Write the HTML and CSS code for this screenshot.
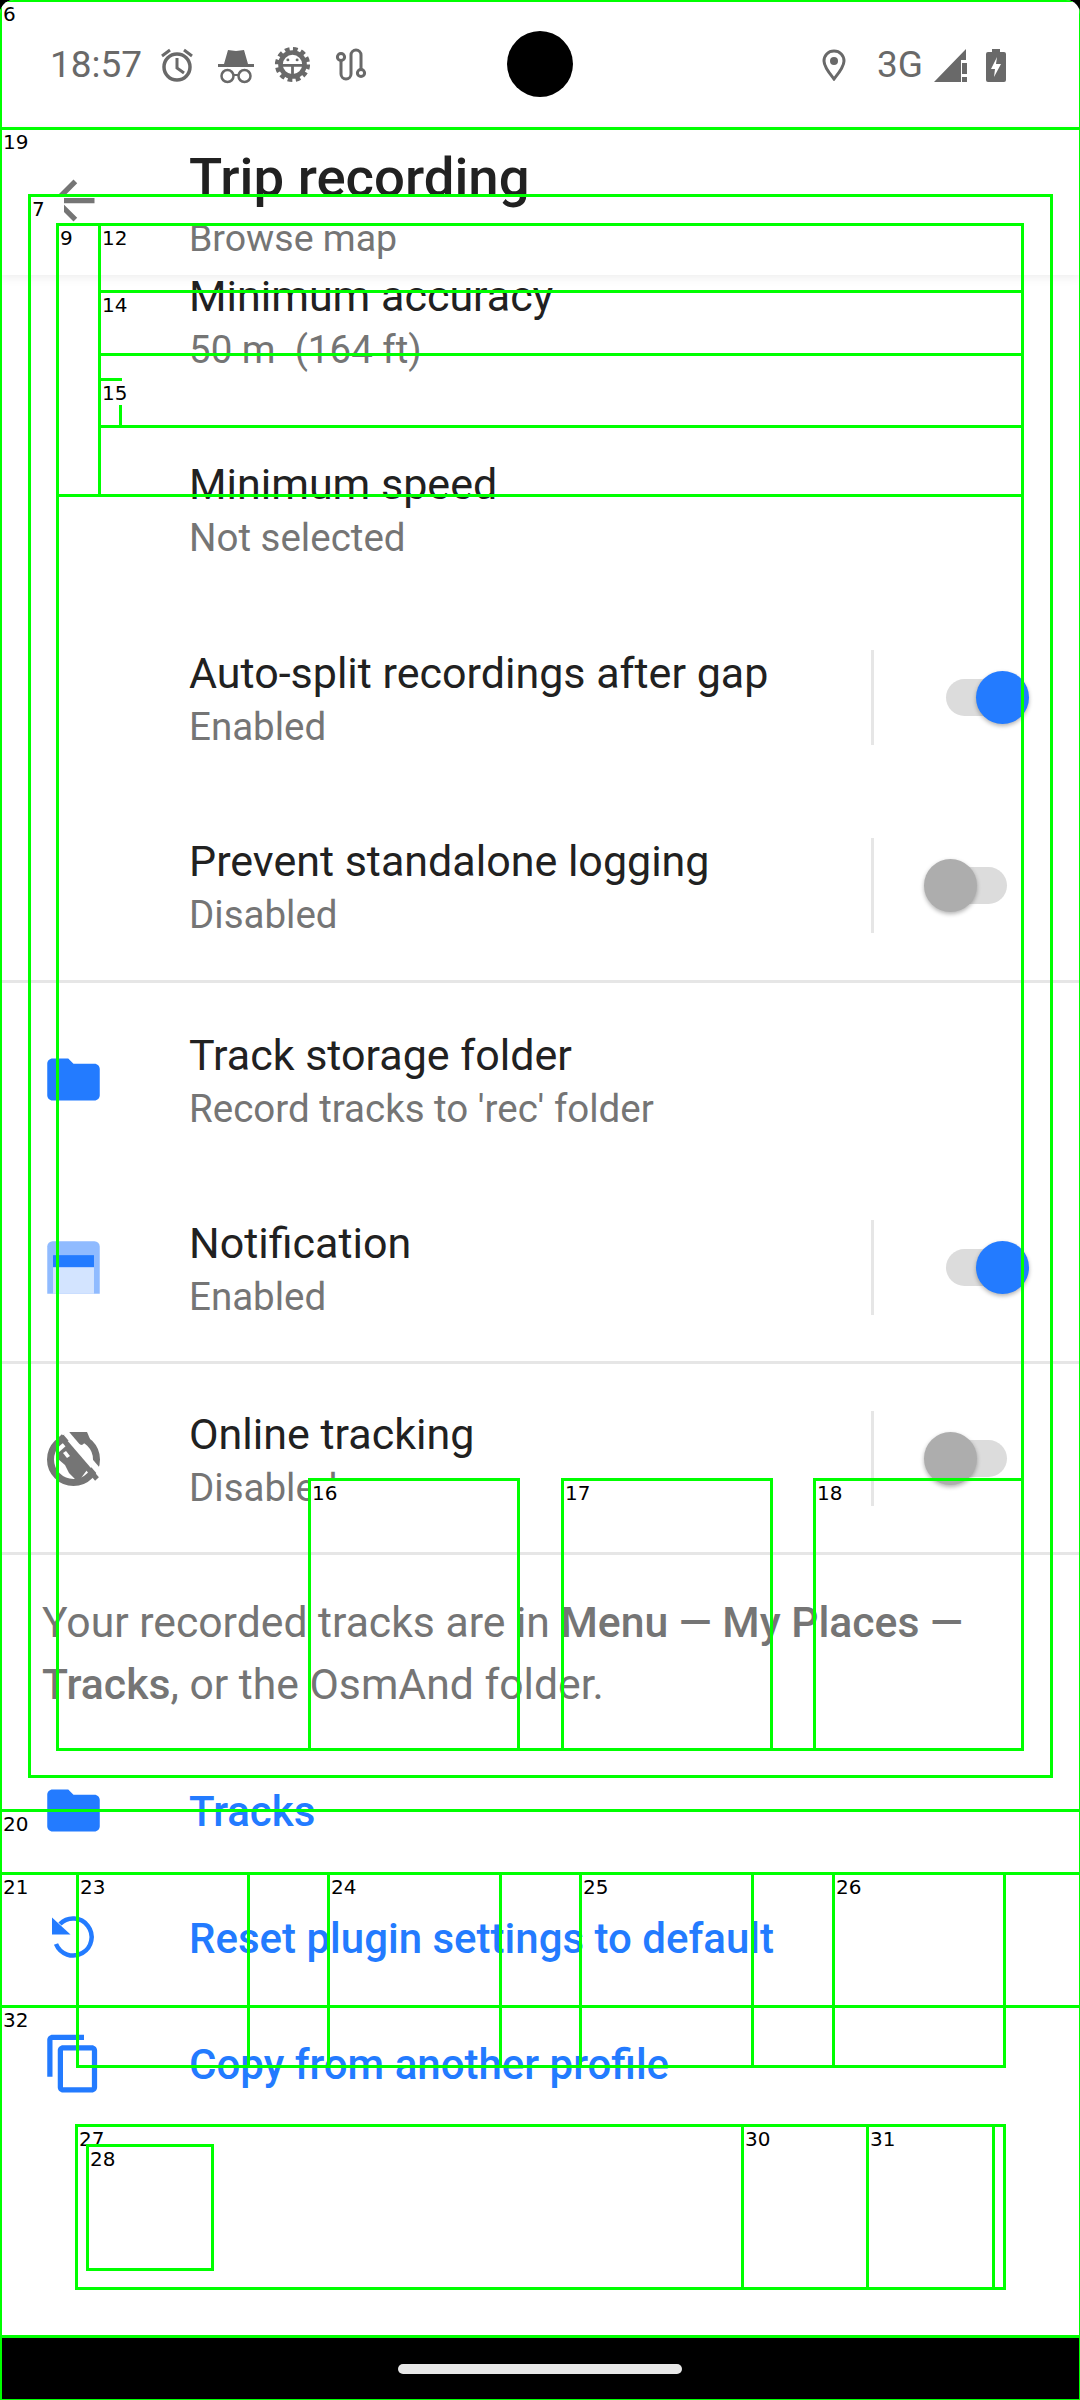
FILE: index.html
```html
<!DOCTYPE html>
<html lang="en">

<head>
  <meta charset="UTF-8">
  <meta name="viewport" content="width=device-width, initial-scale=1.0">
  <title>Trip recording</title>
  <link rel="stylesheet" href="styles.css">
</head>

<body>
  <div class="screen">
    <!-- Status bar -->
    <div class="status-bar">
      <span class="time">18:57</span>
      <svg class="st-alarm" viewBox="0 0 36 38" width="36" height="38">
        <circle cx="18" cy="21" r="13" fill="none" stroke="#696969" stroke-width="3.5"/>
        <path d="M18 12v10l7 5M3 10l8-6M33 10l-8-6" fill="none" stroke="#696969" stroke-width="3"/>
      </svg>
      <svg class="st-spy" viewBox="0 0 38 38" width="38" height="38">
        <path d="M7 17L11 3l8 1 8-1 4 14z" fill="#696969"/>
        <rect x="1" y="17" width="36" height="3" fill="#696969"/>
        <circle cx="10.5" cy="29" r="6" fill="none" stroke="#696969" stroke-width="2.5"/>
        <circle cx="27.5" cy="29" r="6" fill="none" stroke="#696969" stroke-width="2.5"/>
        <path d="M16 28h6" stroke="#696969" stroke-width="2"/>
      </svg>
      <svg class="st-gear" viewBox="0 0 40 40" width="37" height="37">
        <circle cx="20" cy="20" r="16.5" fill="none" stroke="#696969" stroke-width="5" stroke-dasharray="5 3.64"/>
        <circle cx="20" cy="20" r="13" fill="none" stroke="#696969" stroke-width="5"/>
        <path d="M8 21h24M20 21v12" stroke="#696969" stroke-width="3"/>
        <circle cx="15" cy="15" r="1.6" fill="#696969"/>
        <circle cx="25" cy="15" r="1.6" fill="#696969"/>
      </svg>
      <svg class="st-route" viewBox="0 0 32 36" width="32" height="36">
        <circle cx="6" cy="10" r="3.6" fill="none" stroke="#696969" stroke-width="3"/>
        <circle cx="26" cy="26" r="3.6" fill="none" stroke="#696969" stroke-width="3"/>
        <path d="M6 14v13a5 5 0 0 0 10 0V8a5 5 0 0 1 10 0v14" fill="none" stroke="#696969" stroke-width="3"/>
      </svg>
      <span class="status-spacer"></span>
      <svg class="st-pin" viewBox="0 0 24 32" width="24" height="32">
        <path d="M12 2C6 2 2 6.500 2 12c0 6 6 13 10 18 4-5 10-12 10-18C22 6.500 18 2 12 2z" fill="none" stroke="#696969" stroke-width="3"/>
        <circle cx="12" cy="12" r="4" fill="#696969"/>
      </svg>
      <span class="net">3G</span>
      <svg class="st-signal" viewBox="0 0 33 33" width="33" height="33">
        <path d="M0 33L32 0v11h-5v22z" fill="#696969"/>
        <rect x="28" y="14" width="5" height="11" fill="#696969"/>
        <rect x="28" y="28" width="5" height="5" fill="#696969"/>
      </svg>
      <svg class="st-battery" viewBox="0 0 20 34" width="20" height="34">
        <path d="M6 1h8v3h4a2 2 0 0 1 2 2v26a2 2 0 0 1-2 2H2a2 2 0 0 1-2-2V6a2 2 0 0 1 2-2h4z" fill="#696969"/>
        <path d="M11 9l-6 12h4l-1 8 7-13h-5z" fill="#fff"/>
      </svg>
      <span class="camera"></span>
    </div>

    <!-- App bar -->
    <div class="app-bar">
      <svg class="icon back" viewBox="0 0 24 24"><path d="M20 11H7.830l5.590-5.590L12 4l-8 8 8 8 1.410-1.410L7.830 13H20v-2z" fill="#757575"/></svg>
      <div class="app-bar-text">
        <div class="app-title">Trip recording</div>
        <div class="app-sub">Browse map</div>
      </div>
    </div>

    <div class="list">
      <div class="row row-top">
        <div class="icon-slot"></div>
        <div class="row-text"><div class="row-title">Minimum accuracy</div><div class="row-sub">50 m &nbsp;(164 ft)</div></div>
      </div>
      <div class="row row-top">
        <div class="icon-slot"></div>
        <div class="row-text"><div class="row-title">Minimum speed</div><div class="row-sub">Not selected</div></div>
      </div>
      <div class="row">
        <div class="icon-slot"></div>
        <div class="row-text"><div class="row-title">Auto-split recordings after gap</div><div class="row-sub">Enabled</div></div>
        <div class="switch-wrap"><span class="switch on"></span></div>
      </div>
      <div class="row">
        <div class="icon-slot"></div>
        <div class="row-text"><div class="row-title">Prevent standalone logging</div><div class="row-sub">Disabled</div></div>
        <div class="switch-wrap"><span class="switch off"></span></div>
      </div>
      <div class="divider divider-gap"></div>
      <div class="row">
        <div class="icon-slot">
          <svg class="icon" viewBox="0 0 24 24"><path d="M10 4H4c-1.100 0-2 .9-2 2v12c0 1.100.9 2 2 2h16c1.100 0 2-.9 2-2V8c0-1.100-.9-2-2-2h-8l-2-2z" fill="#237bff"/></svg>
        </div>
        <div class="row-text"><div class="row-title">Track storage folder</div><div class="row-sub">Record tracks to 'rec' folder</div></div>
      </div>
      <div class="row">
        <div class="icon-slot">
          <svg class="icon" viewBox="0 0 24 24">
            <path d="M4 2h16a2 2 0 0 1 2 2v18H2V4a2 2 0 0 1 2-2z" fill="#90bbff"/>
            <rect x="4.200" y="12" width="15.600" height="10" fill="#d3e4ff"/>
            <rect x="4.200" y="7.300" width="15.600" height="4.500" fill="#237bff"/>
          </svg>
        </div>
        <div class="row-text"><div class="row-title">Notification</div><div class="row-sub">Enabled</div></div>
        <div class="switch-wrap"><span class="switch on"></span></div>
      </div>
      <div class="divider"></div>
      <div class="row">
        <div class="icon-slot">
          <svg class="icon" viewBox="0 0 63 63">
            <circle cx="31.500" cy="32.500" r="23" fill="none" stroke="#757575" stroke-width="7"/>
            <path d="M27 5h18l3 7-8 6-9-2z" fill="#757575"/>
            <path d="M16 26l9-8 6 7 14 18-9 12-9-9-4-8-7-6z" fill="#757575"/>
            <path d="M24 6l36 42" stroke="#fff" stroke-width="6"/>
            <path d="M18 9l37 43" stroke="#757575" stroke-width="5"/>
            <path d="M21 26l4 5 3-2-4-5z" fill="#fff"/>
          </svg>
        </div>
        <div class="row-text"><div class="row-title">Online tracking</div><div class="row-sub">Disabled</div></div>
        <div class="switch-wrap"><span class="switch off"></span></div>
      </div>
      <div class="divider"></div>

      <p class="hint">Your recorded tracks are in <b>Menu — My Places — Tracks</b>, or the OsmAnd folder.</p>

      <div class="action action-tracks">
        <div class="icon-slot">
          <svg class="icon" viewBox="0 0 24 24"><path d="M10 4H4c-1.100 0-2 .9-2 2v12c0 1.100.9 2 2 2h16c1.100 0 2-.9 2-2V8c0-1.100-.9-2-2-2h-8l-2-2z" fill="#237bff"/></svg>
        </div>
        <span>Tracks</span>
      </div>
      <div class="action">
        <div class="icon-slot">
          <svg class="icon" viewBox="0 0 63 63">
            <path d="M18 18A18.500 18.500 0 1 1 14 38" fill="none" stroke="#237bff" stroke-width="4.500"/>
            <path d="M10 11.500v17h18.500z" fill="#237bff"/>
          </svg>
        </div>
        <span>Reset plugin settings to default</span>
      </div>
      <div class="action">
        <div class="icon-slot">
          <svg class="icon" viewBox="0 0 24 24"><path d="M16 1H4c-1.100 0-2 .9-2 2v14h2V3h12V1zm3 4H8c-1.100 0-2 .9-2 2v14c0 1.100.9 2 2 2h11c1.100 0 2-.9 2-2V7c0-1.100-.9-2-2-2zm0 16H8V7h11v14z" fill="#237bff"/></svg>
        </div>
        <span>Copy from another profile</span>
      </div>
    </div>

    <!-- Navigation bar -->
    <div class="nav-bar"><span class="home-pill"></span></div>

    <!-- Numbered element boxes drawn over the screen -->
    <div class="overlay">
      <div class="box box-6"><span>6</span></div>
      <div class="box box-19"><span>19</span></div>
      <div class="box box-7"><span>7</span></div>
      <div class="box box-9"><span>9</span></div>
      <div class="box box-10"></div>
      <div class="box box-11"></div>
      <div class="box box-12"><span>12</span></div>
      <div class="box box-14"><span>14</span></div>
      <div class="box box-13"></div>
      <div class="box box-15"><span>15</span></div>
      <div class="box box-16"><span>16</span></div>
      <div class="box box-17"><span>17</span></div>
      <div class="box box-18"><span>18</span></div>
      <div class="box box-20"><span>20</span></div>
      <div class="box box-21"><span>21</span></div>
      <div class="box box-22"></div>
      <div class="box box-23"><span>23</span></div>
      <div class="box box-24"><span>24</span></div>
      <div class="box box-25"><span>25</span></div>
      <div class="box box-26"><span>26</span></div>
      <div class="box box-32"><span>32</span></div>
      <div class="box box-27"><span>27</span></div>
      <div class="box box-28"><span>28</span></div>
      <div class="box box-30"><span>30</span></div>
      <div class="box box-31"><span>31</span></div>
      <div class="box box-29"></div>
    </div>
  </div>
</body>

</html>
```

FILE: styles.css
```css
body {
  margin: 0;
  background-color: #000;
  font-family: Roboto, "Liberation Sans", sans-serif;
  color: #212121;
}

.screen {
  position: relative;
  width: 1080px;
  height: 2400px;
  overflow: hidden;
  background-color: #fff;
  border-radius: 14px 14px 0 0;
  display: flex;
  flex-direction: column;
}

/* Status bar */
.status-bar {
  position: relative;
  height: 128px;
  flex: none;
  display: flex;
  align-items: center;
  padding: 0 74px 0 50px;
  box-sizing: border-box;
  color: #696969;
}

.time {
  font-size: 37px;
  margin-top: 1px;
  width: 108.500px;
}

.st-alarm { margin: 2px 22px 0 0; }
.st-spy { margin: 3px 19px 0 0; }
.st-gear { margin: 0 24px 0 0; }
.st-route { margin: 1px 0 0 0; }
.status-spacer { flex: 1; }
.st-pin { margin: 2px 31px 0 0; }

.net {
  font-size: 37px;
  margin-right: 11px;
}

.st-signal { margin: 2px 19px 0 0; }
.st-battery { margin: 2px 0 0 0; }

.camera {
  position: absolute;
  left: 507px;
  top: 31px;
  width: 66px;
  height: 66px;
  border-radius: 50%;
  background-color: #000;
}

/* App bar */
.app-bar {
  position: relative;
  z-index: 2;
  flex: none;
  height: 147px;
  margin-bottom: -48px;
  background-color: #fff;
  display: flex;
  align-items: flex-start;
  padding-left: 42px;
  box-shadow: 0 2px 10px rgba(0, 0, 0, 0.08);
}

.icon {
  display: block;
  width: 63px;
  height: 63px;
}

.back {
  flex: none;
  margin: 41px 84px 0 0;
}

.app-title {
  font-size: 54.500px;
  font-weight: 500;
  line-height: 62px;
  margin-top: 18px;
}

.app-sub {
  font-size: 37.500px;
  line-height: 60px;
  color: #757575;
}

/* Settings rows */
.list {
  flex: 1;
}

.row {
  height: 188px;
  display: flex;
  align-items: center;
}

.icon-slot {
  flex: none;
  width: 63px;
  margin: 0 84px 0 42px;
}

.row-text {
  flex: 1;
  padding-top: 6px;
}

.row-top .row-text {
  padding-top: 4px;
}

.row-title {
  font-size: 43px;
  line-height: 54px;
}

.row-sub {
  font-size: 38.500px;
  line-height: 54px;
  color: #757575;
}

.switch-wrap {
  flex: none;
  height: 95px;
  width: 137px;
  border-left: 3px solid #e6e6e6;
  padding-left: 72px;
  margin-right: 72px;
  display: flex;
  align-items: center;
  box-sizing: border-box;
}

.switch {
  position: relative;
  flex: none;
  width: 61px;
  height: 37px;
  border-radius: 19px;
  background-color: #dcdcdc;
}

.switch::after {
  content: "";
  position: absolute;
  top: -8px;
  width: 53px;
  height: 53px;
  border-radius: 50%;
  box-shadow: 0 2px 4px rgba(0, 0, 0, 0.3);
}

.switch.on::after {
  left: 30px;
  background-color: #237bff;
}

.switch.off::after {
  left: -22px;
  background-color: #adadad;
}

.divider {
  height: 3px;
  background-color: #e6e6e6;
}

.divider-gap {
  margin: 1px 0 2px;
}

.hint {
  margin: 36px 42px 0 42px;
  font-size: 42.700px;
  line-height: 62px;
  color: #757575;
}

.hint b {
  font-weight: 500;
}

.action {
  height: 126px;
  display: flex;
  align-items: center;
  font-size: 42px;
  font-weight: 500;
  color: #237bff;
}

.action span {
  padding-top: 3px;
}

.action-tracks {
  height: 128px;
  margin-top: 31px;
}

/* Navigation bar */
.nav-bar {
  position: absolute;
  left: 0;
  right: 0;
  bottom: 0;
  height: 62px;
  background-color: #000;
  display: flex;
  justify-content: center;
  align-items: center;
}

.home-pill {
  width: 284px;
  height: 10px;
  border-radius: 5px;
  background-color: #e8e8e8;
}

/* Numbered boxes */
.overlay {
  position: absolute;
  inset: 0;
  z-index: 5;
}

.box {
  position: absolute;
  box-sizing: border-box;
  border: 3px solid #0f0;
}

.box span {
  position: absolute;
  left: 0;
  top: 0;
  min-width: 33px;
  height: 24px;
  padding-left: 1px;
  box-sizing: border-box;
  background-color: #fff;
  color: #000;
  font-family: "DejaVu Sans", sans-serif;
  font-size: 20px;
  line-height: 24px;
}

.box-6 { left: 0; top: 0; width: 1080px; height: 2400px; border-width: 2px 1px 1px 2px; }
.box-19 { left: 0; top: 127px; width: 1080px; height: 1685px; border-width: 3px 1px 3px 2px; }
.box-7 { left: 28px; top: 194px; width: 1025px; height: 1584px; }
.box-9 { left: 56px; top: 223px; width: 968px; height: 274px; }
.box-10 { left: 56px; top: 494px; width: 968px; height: 1257px; }
.box-11 { left: 98px; top: 223px; width: 926px; height: 274px; }
.box-12 { left: 98px; top: 223px; width: 926px; height: 70px; }
.box-14 { left: 98px; top: 290px; width: 926px; height: 66px; }
.box-13 { left: 98px; top: 353px; width: 926px; height: 75px; }
.box-15 { left: 98px; top: 378px; width: 24px; height: 50px; }
.box-16 { left: 308px; top: 1478px; width: 212px; height: 273px; }
.box-17 { left: 561px; top: 1478px; width: 212px; height: 273px; }
.box-18 { left: 813px; top: 1478px; width: 211px; height: 273px; }
.box-20 { left: 0; top: 1809px; width: 1080px; height: 66px; border-width: 3px 1px 3px 2px; }
.box-21 { left: 0; top: 1872px; width: 1080px; height: 136px; border-width: 3px 1px 3px 2px; }
.box-22 { left: 76px; top: 1872px; width: 930px; height: 196px; }
.box-23 { left: 76px; top: 1872px; width: 174px; height: 196px; }
.box-24 { left: 327px; top: 1872px; width: 175px; height: 196px; }
.box-25 { left: 579px; top: 1872px; width: 175px; height: 196px; }
.box-26 { left: 832px; top: 1872px; width: 174px; height: 196px; }
.box-32 { left: 0; top: 2005px; width: 1080px; height: 333px; border-width: 3px 1px 3px 2px; }
.box-27 { left: 75px; top: 2124px; width: 931px; height: 166px; }
.box-28 { left: 86px; top: 2144px; width: 128px; height: 127px; }
.box-30 { left: 741px; top: 2124px; width: 128px; height: 166px; }
.box-31 { left: 866px; top: 2124px; width: 129px; height: 166px; }
.box-29 { left: 992px; top: 2124px; width: 14px; height: 166px; }
```
